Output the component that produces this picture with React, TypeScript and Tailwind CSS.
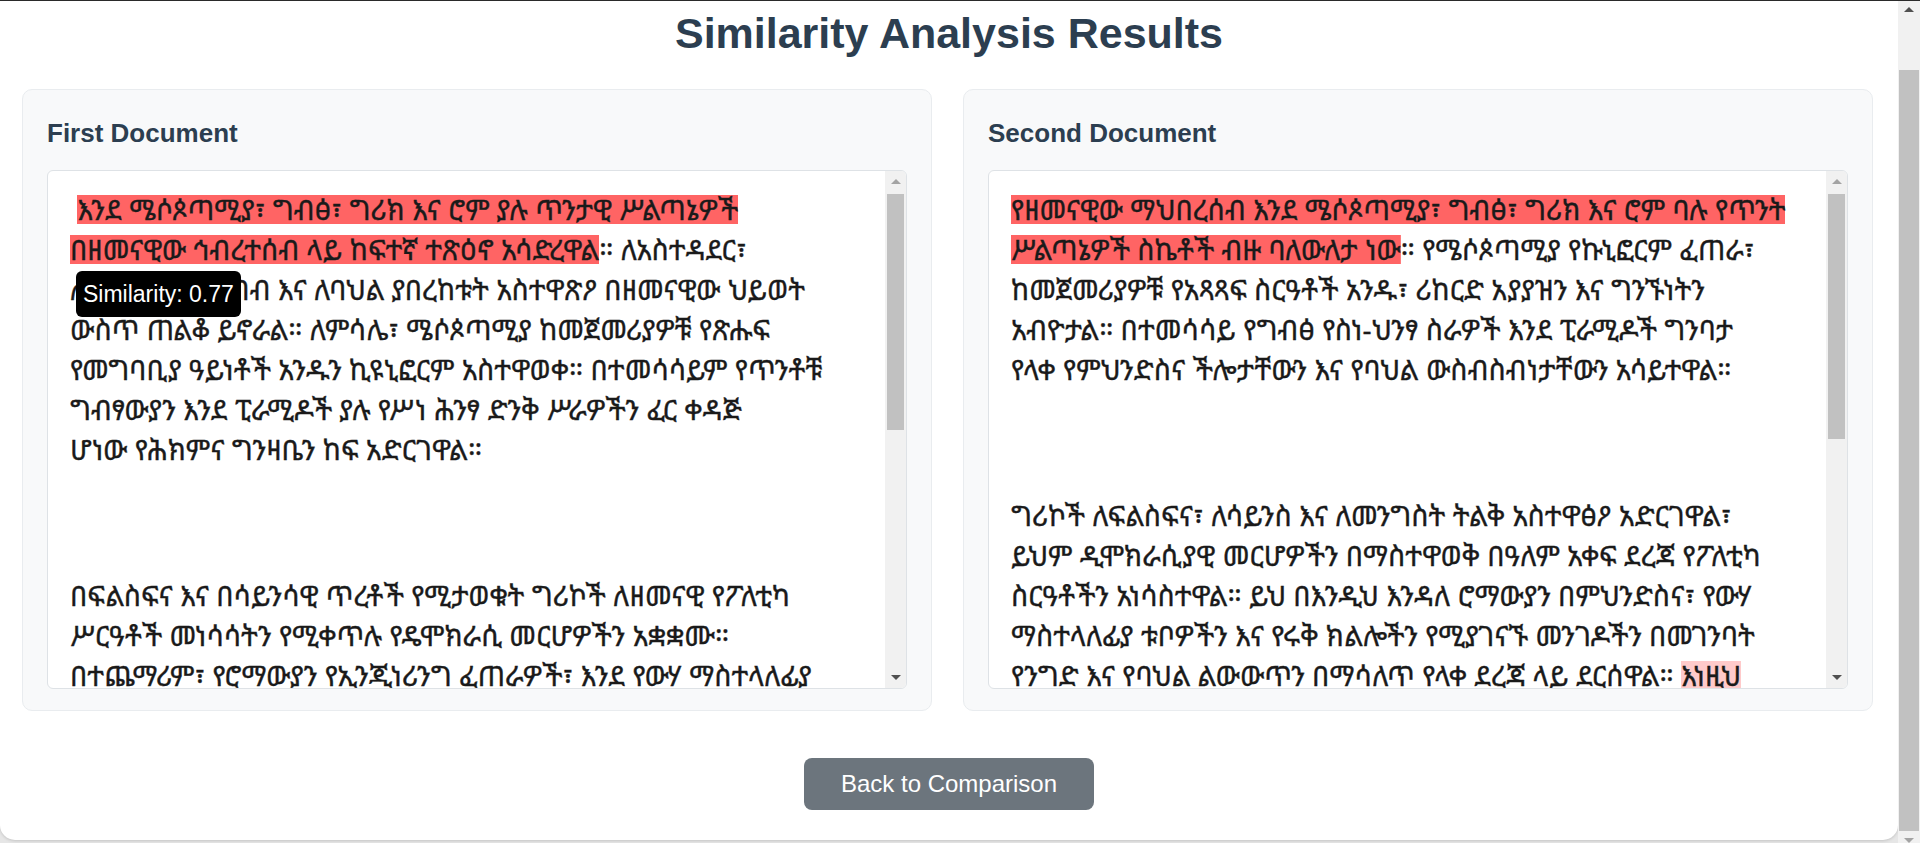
import React from "react";

const ethi =
  "font-['Noto_Sans_Ethiopic','Abyssinica_SIL','DejaVu_Sans','Liberation_Sans',sans-serif]";
const sans = "font-['Liberation_Sans',Arial,sans-serif]";

const hiStrong =
  "box-decoration-clone bg-[image:linear-gradient(#ff6464,#ff6464)] bg-no-repeat bg-center bg-[length:100%_29px]";
const hiLight =
  "box-decoration-clone bg-[image:linear-gradient(#ffcaca,#ffcaca)] bg-no-repeat bg-center bg-[length:100%_29px]";

function Arrow({ dir, color }: { dir: "up" | "down"; color: string }) {
  return (
    <svg width="10" height="5" viewBox="0 0 10 5" className="block">
      {dir === "up" ? (
        <polygon points="0,5 10,5 5,0" fill={color} />
      ) : (
        <polygon points="0,0 10,0 5,5" fill={color} />
      )}
    </svg>
  );
}

function InnerScrollbar({ thumb }: { thumb: number }) {
  return (
    <div className="flex w-[21px] shrink-0 flex-col bg-[#f1f1f1]">
      <div className="flex h-[21px] items-center justify-center">
        <Arrow dir="up" color="#a3a3a3" />
      </div>
      <div className="mx-[2px] mt-[2px] bg-[#c1c1c1]" style={{ height: thumb }} />
      <div className="flex-1" />
      <div className="flex h-[21px] items-center justify-center">
        <Arrow dir="down" color="#505050" />
      </div>
    </div>
  );
}

function TextBox({
  children,
  tooltip,
  thumb,
}: {
  children: React.ReactNode;
  tooltip?: boolean;
  thumb: number;
}) {
  return (
    <div className="relative flex h-[519px] overflow-hidden rounded-[6px] border border-[#dee2e6] bg-white">
      <div className="min-w-0 flex-1 overflow-hidden">
        <div
          className={
            "whitespace-nowrap px-[22px] pt-[18px] text-[28px] leading-[40px] text-[#1a1a1a] [-webkit-text-stroke:0.35px_#1a1a1a] " +
            ethi
          }
        >
          {children}
        </div>
      </div>
      <InnerScrollbar thumb={thumb} />
      {tooltip && (
        <div
          className={
            "absolute left-[28px] top-[100px] rounded-[6px] bg-black px-[7px] py-[8px] text-[23px] leading-[30px] text-white " +
            sans
          }
        >
          Similarity: 0.77
        </div>
      )}
    </div>
  );
}

function Panel({
  title,
  children,
  tooltip,
  thumb,
}: {
  title: string;
  children: React.ReactNode;
  tooltip?: boolean;
  thumb: number;
}) {
  return (
    <div className="rounded-[10px] border border-[#e9ecef] bg-[#f8f9fa] px-[24px] pt-[24px] pb-[21px]">
      <h3
        className={
          "mb-[18px] text-[26px] leading-[38px] font-bold text-[#2c3e50] " + sans
        }
      >
        {title}
      </h3>
      <TextBox tooltip={tooltip} thumb={thumb}>
        {children}
      </TextBox>
    </div>
  );
}

export default function App() {
  return (
    <div className="flex h-[843px] w-full flex-col overflow-hidden bg-[#e6e6e6]">
      <div className="h-px w-full shrink-0 bg-[#2b2b2b]" />
      <div className="flex min-h-0 flex-1">
        <div className="min-w-0 flex-1">
          <div className="rounded-b-[15px] bg-white pt-[7px] pb-[30px] shadow-[0_1px_3px_rgba(0,0,0,0.15)]">
            <h1
              className={
                "text-center text-[43px] leading-[50px] font-bold text-[#2c3e50] " +
                sans
              }
            >
              Similarity Analysis Results
            </h1>
            <div className="mt-[31px] grid grid-cols-2 gap-[31px] pl-[22px] pr-[25px]">
              <Panel title="First Document" tooltip thumb={236}>
                <p>
                  {"\u00a0"}
                  <span className={hiStrong}>
                    እንደ ሜሶጶጣሚያ፣ ግብፅ፣ ግሪክ እና ሮም ያሉ ጥንታዊ ሥልጣኔዎች
                    <br />
                    በዘመናዊው ኅብረተሰብ ላይ ከፍተኛ ተጽዕኖ አሳድረዋል
                  </span>
                  ። ለአስተዳደር፣
                  <br />
                  ለሕግ፣ ለሥነ-ጥበብ እና ለባህል ያበረከቱት አስተዋጽዖ በዘመናዊው ህይወት
                  <br />
                  ውስጥ ጠልቆ ይኖራል። ለምሳሌ፣ ሜሶጶጣሚያ ከመጀመሪያዎቹ የጽሑፍ
                  <br />
                  የመግባቢያ ዓይነቶች አንዱን ኪዩኒፎርም አስተዋወቀ። በተመሳሳይም የጥንቶቹ
                  <br />
                  ግብፃውያን እንደ ፒራሚዶች ያሉ የሥነ ሕንፃ ድንቅ ሥራዎችን ፈር ቀዳጅ
                  <br />
                  ሆነው የሕክምና ግንዛቤን ከፍ አድርገዋል።
                </p>
                <p className="mt-[106px]">
                  በፍልስፍና እና በሳይንሳዊ ጥረቶች የሚታወቁት ግሪኮች ለዘመናዊ የፖለቲካ
                  <br />
                  ሥርዓቶች መነሳሳትን የሚቀጥሉ የዴሞክራሲ መርሆዎችን አቋቋሙ።
                  <br />
                  በተጨማሪም፣ የሮማውያን የኢንጂነሪንግ ፈጠራዎች፣ እንደ የውሃ ማስተላለፊያ
                </p>
              </Panel>
              <Panel title="Second Document" thumb={245}>
                <p>
                  <span className={hiStrong}>
                    የዘመናዊው ማህበረሰብ እንደ ሜሶጶጣሚያ፣ ግብፅ፣ ግሪክ እና ሮም ባሉ የጥንት
                    <br />
                    ሥልጣኔዎች ስኬቶች ብዙ ባለውለታ ነው
                  </span>
                  ። የሜሶጶጣሚያ የኩኒፎርም ፈጠራ፣
                  <br />
                  ከመጀመሪያዎቹ የአጻጻፍ ስርዓቶች አንዱ፣ ሪከርድ አያያዝን እና ግንኙነትን
                  <br />
                  አብዮታል። በተመሳሳይ የግብፅ የስነ-ህንፃ ስራዎች እንደ ፒራሚዶች ግንባታ
                  <br />
                  የላቀ የምህንድስና ችሎታቸውን እና የባህል ውስብስብነታቸውን አሳይተዋል።
                </p>
                <p className="mt-[106px]">
                  ግሪኮች ለፍልስፍና፣ ለሳይንስ እና ለመንግስት ትልቅ አስተዋፅዖ አድርገዋል፣
                  <br />
                  ይህም ዲሞክራሲያዊ መርሆዎችን በማስተዋወቅ በዓለም አቀፍ ደረጃ የፖለቲካ
                  <br />
                  ስርዓቶችን አነሳስተዋል። ይህ በእንዲህ እንዳለ ሮማውያን በምህንድስና፣ የውሃ
                  <br />
                  ማስተላለፊያ ቱቦዎችን እና የሩቅ ክልሎችን የሚያገናኙ መንገዶችን በመገንባት
                  <br />
                  የንግድ እና የባህል ልውውጥን በማሳለጥ የላቀ ደረጃ ላይ ደርሰዋል።{" "}
                  <span className={hiLight}>እነዚህ</span>
                </p>
              </Panel>
            </div>
            <div className="mt-[47px] flex justify-center">
              <button
                className={
                  "h-[52px] rounded-[8px] bg-[#6c757d] px-[37px] text-[24px] text-white " +
                  sans
                }
              >
                Back to Comparison
              </button>
            </div>
          </div>
        </div>
        <div className="flex w-[22px] shrink-0 flex-col bg-[#f1f1f1]">
          <div className="flex h-[17px] items-center justify-center">
            <Arrow dir="up" color="#505050" />
          </div>
          <div className="mx-[1px] mt-[52px] h-[761px] bg-[#c1c1c1]" />
          <div className="flex-1" />
          <div className="flex h-[10px] items-end justify-center">
            <Arrow dir="down" color="#a3a3a3" />
          </div>
        </div>
      </div>
    </div>
  );
}
